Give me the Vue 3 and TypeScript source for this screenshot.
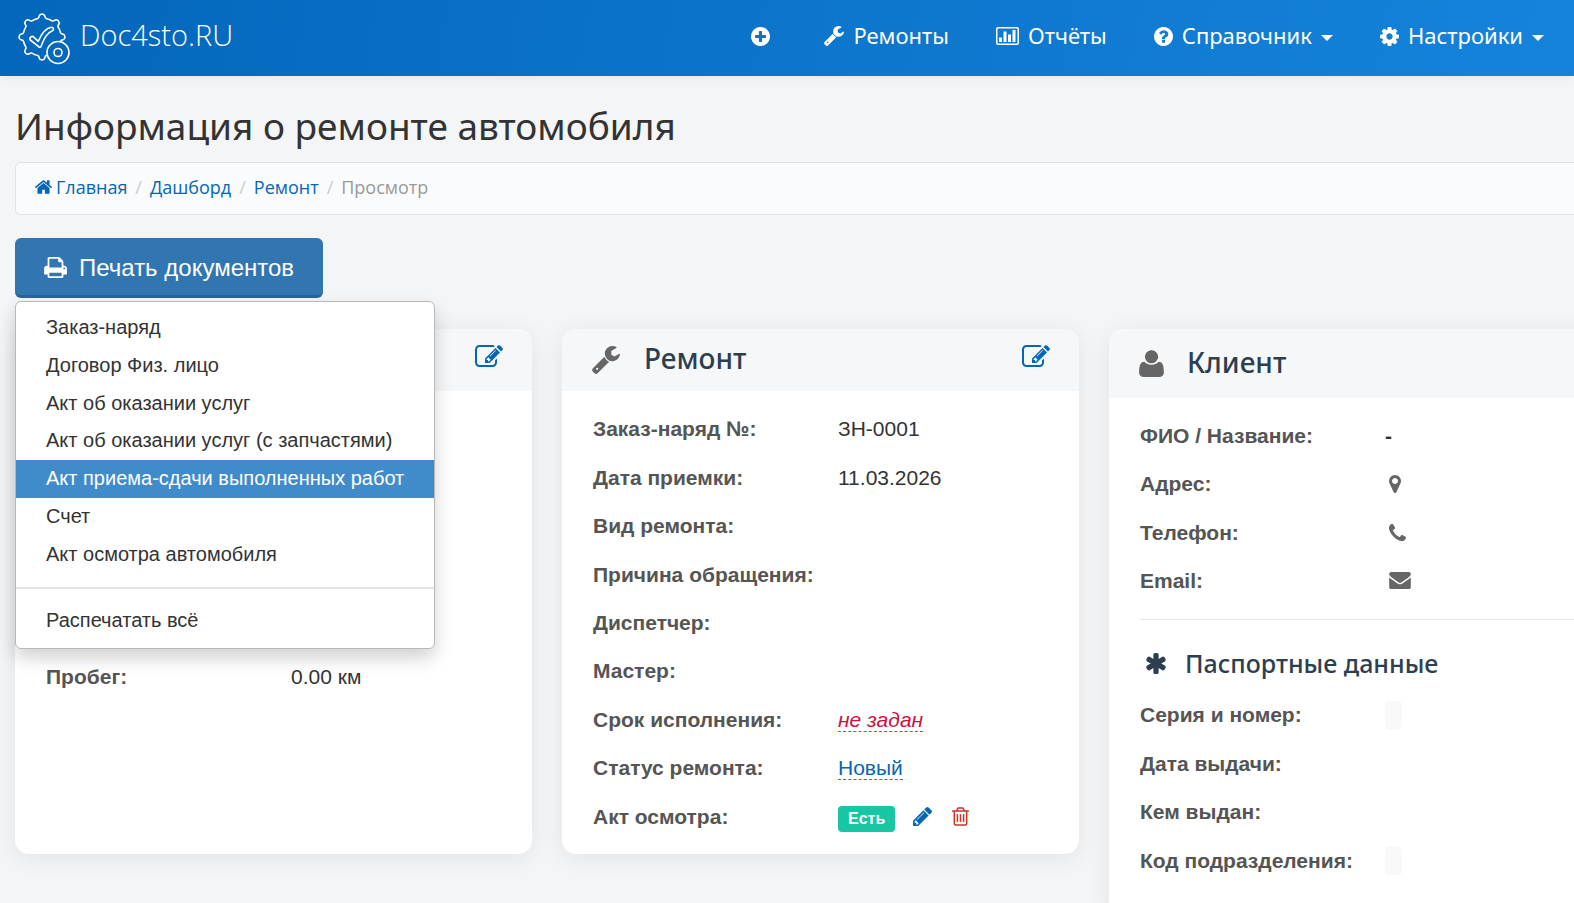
<script setup lang="ts">
import { ref } from 'vue'

interface Glyph {
  box: string
  d: string
}

const glyphs: Record<string, Glyph> = {
  plus: {
    box: '128 128 1536 1536',
    d: 'M1344 960v-128q0-26-19-45t-45-19h-256v-256q0-26-19-45t-45-19h-128q-26 0-45 19t-19 45v256h-256q-26 0-45 19t-19 45v128q0 26 19 45t45 19h256v256q0 26 19 45t45 19h128q26 0 45-19t19-45v-256h256q26 0 45-19t19-45zm320-64q0 209-103 385.5t-279.5 279.5-385.5 103-385.5-103-279.5-279.5-103-385.5 103-385.5 279.5-279.5 385.5-103 385.5 103 279.5 279.5 103 385.5z',
  },
  wrench: {
    box: '80 128 1648 1648',
    d: 'M448 1472q0-26-19-45t-45-19-45 19-19 45 19 45 45 19 45-19 19-45zm644-420l-682 682q-37 37-90 37-52 0-91-37l-106-108q-38-36-38-90 0-53 38-91l681-681q39 98 114.5 173.5t173.5 114.5zm634-435q0 39-23 106-47 134-164.5 217.5t-258.5 83.5q-185 0-316.5-131.5t-131.5-316.5 131.5-316.5 316.5-131.5q58 0 121.5 16.5t107.5 46.5q16 11 16 28t-16 28l-293 169v224l193 107q5-3 79-48.5t135.5-81 70.5-35.5q15 0 23.5 10t8.5 25z',
  },
  chart: {
    box: '0 0 23 18',
    d: 'M2 0h19q2 0 2 2v14q0 2-2 2h-19q-2 0-2-2v-14q0-2 2-2zM2 1.5q-.5 0-.5.5v14q0 .5.5.5h19q.5 0 .5-.5v-14q0-.5-.5-.5zM3 10.500h3v4.500h-3zM7.500 4.500h3v10.500h-3zM12 7.500h3v7.500h-3zM16.500 3h3v12h-3z',
  },
  question: {
    box: '128 128 1536 1536',
    d: 'M1024 1376v-192q0-14-9-23t-23-9h-192q-14 0-23 9t-9 23v192q0 14 9 23t23 9h192q14 0 23-9t9-23zm256-672q0-88-55.5-163t-138.5-116-170-41q-243 0-371 213-15 24 8 42l132 100q7 6 19 6 16 0 25-12 53-68 86-92 34-24 86-24 48 0 85.5 26t37.5 59q0 38-20 61t-68 45q-63 28-115.5 86.5t-52.500 125.5v36q0 14 9 23t23 9h192q14 0 23-9t9-23q0-19 21.5-49.5t54.5-49.5q32-18 49-28.5t46-35 44.5-48 28-60.5 12.5-81zm384 192q0 209-103 385.5t-279.5 279.5-385.5 103-385.5-103-279.5-279.5-103-385.5 103-385.5 279.5-279.5 385.5-103 385.5 103 279.5 279.5 103 385.5z',
  },
  cog: {
    box: '128 128 1536 1536',
    d: 'M1152 896q0-106-75-181t-181-75-181 75-75 181 75 181 181 75 181-75 75-181zm512-109v222q0 12-8 23t-20 13l-185 28q-19 54-39 91 35 50 107 138 10 12 10 25t-9 23q-27 37-99 108t-94 71q-12 0-26-9l-138-108q-44 23-91 38-16 136-29 186-7 28-36 28h-222q-14 0-24.5-8.5t-11.5-21.5l-28-184q-49-16-90-37l-141 107q-10 9-25 9-14 0-25-11-126-114-165-168-7-10-7-23 0-12 8-23 15-21 51-66.5t54-70.5q-27-50-41-99l-183-27q-13-2-21-12.5t-8-23.5v-222q0-12 8-23t19-13l186-28q14-46 39-92-40-57-107-138-10-12-10-24 0-10 9-23 26-36 98.5-107.5t94.5-71.5q13 0 26 10l138 107q44-23 91-38 16-136 29-186 7-28 36-28h222q14 0 24.5 8.5t11.5 21.5l28 184q49 16 90 37l142-107q9-9 24-9 13 0 25 10 129 119 165 170 7 8 7 22 0 12-8 23-15 21-51 66.5t-54 70.5q26 50 41 98l183 28q13 2 21 12.5t8 23.5z',
  },
  home: {
    box: '88 253 1616 1283',
    d: 'M1472 992v480q0 26-19 45t-45 19h-384v-384h-256v384h-384q-26 0-45-19t-19-45v-480q0-1 .5-3t.5-3l575-474 575 474q1 2 1 6zm223-69l-62 74q-8 9-21 11h-3q-13 0-21-7l-692-577-692 577q-12 8-24 7-13-2-21-11l-62-74q-8-10-7-23.5t11-21.5l719-599q32-26 76-26t76 26l244 204v-195q0-14 9-23t23-9h192q14 0 23 9t9 23v408l219 182q10 8 11 21.5t-7 23.5z',
  },
  print: {
    box: '64 128 1664 1536',
    d: 'M448 1536h896v-256h-896v256zm0-640h896v-384h-160q-40 0-68-28t-28-68v-160h-640v640zm1152 64q0-26-19-45t-45-19-45 19-19 45 19 45 45 19 45-19 19-45zm128 0v416q0 13-9.5 22.5t-22.5 9.5h-224v160q0 40-28 68t-68 28h-960q-40 0-68-28t-28-68v-160h-224q-13 0-22.5-9.5t-9.5-22.5v-416q0-79 56.5-135.5t135.5-56.5h64v-544q0-40 28-68t68-28h672q40 0 88 20t76 48l152 152q28 28 48 76t20 88v256h64q79 0 135.5 56.5t56.5 135.5z',
  },
  edit: {
    box: '0 128 1792 1408',
    d: 'M888 1184l116-116-152-152-116 116v56h96v96h56zm440-720q-16-16-33 1l-350 350q-17 17-1 33t33-1l350-350q17-17 1-33zm80 594v190q0 119-84.5 203.5t-203.5 84.5h-832q-119 0-203.5-84.5t-84.5-203.5v-832q0-119 84.5-203.5t203.5-84.5h832q63 0 117 25 15 7 18 23 3 17-9 29l-49 49q-14 14-32 8-23-6-45-6h-832q-66 0-113 47t-47 113v832q0 66 47 113t113 47h832q66 0 113-47t47-113v-126q0-13 9-22l64-64q15-15 35-7t20 29zm-96-738l288 288-672 672h-288v-288zm444 132l-92 92-288-288 92-92q28-28 68-28t68 28l152 152q28 28 28 68t-28 68z',
  },
  user: {
    box: '192 128 1408 1536',
    d: 'M1600 1405q0 120-73 189.5t-194 69.5h-874q-121 0-194-69.5t-73-189.500c0-360 60-605 300-613q110 150 404 150t404-150c240 8 300 253 300 613zM1280 512q0 159-112.5 271.5t-271.5 112.5-271.5-112.5-112.5-271.5 112.5-271.5 271.5-112.5 271.5 112.5 112.5 271.5z',
  },
  marker: {
    box: '384 128 1024 1536',
    d: 'M1152 640q0-106-75-181t-181-75-181 75-75 181 75 181 181 75 181-75 75-181zm256 0q0 109-33 179l-364 774q-16 33-47.5 52t-67.5 19-67.5-19-46.5-52l-365-774q-33-70-33-179 0-212 150-362t362-150 362 150 150 362z',
  },
  phone: {
    box: '192 128 1408 1408',
    d: 'M1600 1240q0 27-10 70.5t-21 68.5q-21 50-122 106-94 51-186 51-27 0-53-3.5t-57.5-12.5-47-14.5-55.5-20.5-49-18q-98-35-175-83-127-79-264-216t-216-264q-48-77-83-175-3-9-18-49t-20.5-55.5-14.5-47-12.5-57.5-3.5-53q0-92 51-186 56-101 106-122 25-11 68.5-21t70.5-10q14 0 21 3 18 6 53 76 11 19 30 54t35 63.5 31 53.5q3 4 17.5 25t21.5 35.5 7 28.5q0 20-28.5 50t-62 55-62 53-28.5 46q0 9 5 22.5t8.5 20.5 14 24 11.5 19q76 137 174 235t235 174q2 1 19 11.5t24 14 20.5 8.5 22.5 5q18 0 46-28.5t53-62 55-62 50-28.5q14 0 28.5 7t35.5 21.5 25 17.5q25 15 53.5 31t63.5 35 54 30q70 35 76 53 3 7 3 21z',
  },
  envelope: {
    box: '0 256 1792 1408',
    d: 'M1792 710v794q0 66-47 113t-113 47h-1472q-66 0-113-47t-47-113v-794q44 49 101 87 362 246 497 345 57 42 92.5 65.5t94.5 48 110 24.5h2q51 0 110-24.5t94.5-48 92.5-65.5q170-123 498-345 57-39 100-87zm0-294q0 79-49 151t-122 123q-376 261-468 325-10 7-42.5 31t-54 38.5-52 32.5-57.5 27-50 9h-2q-23 0-50-9t-57.5-27-52-32.5-54-38.5-42.5-31q-91-64-262-182.5t-205-142.5q-62-42-117-115.5t-55-136.5q0-78 41.5-130t118.5-52h1472q65 0 112.5 47t47.5 113z',
  },
  asterisk: {
    box: '182 128 1428 1536',
    d: 'M1546 1050q46 26 59.5 77.5t-12.5 97.5l-64 110q-26 46-77.5 59.5t-97.5-12.5l-266-153v307q0 52-38 90t-90 38h-128q-52 0-90-38t-38-90v-307l-266 153q-46 26-97.5 12.5t-77.5-59.5l-64-110q-26-46-12.5-97.5t59.5-77.5l266-154-266-154q-46-26-59.5-77.5t12.5-97.5l64-110q26-46 77.5-59.5t97.5 12.5l266 153v-307q0-52 38-90t90-38h128q52 0 90 38t38 90v307l266-153q46-26 97.5-12.5t77.5 59.5l64 110q26 46 12.5 97.5t-59.5 77.5l-266 154z',
  },
  pencil: {
    box: '128 149 1515 1515',
    d: 'M491 1536l91-91-235-235-91 91v107h128v128h107zm523-928q0-22-22-22-10 0-17 7l-542 542q-7 7-7 17 0 22 22 22 10 0 17-7l542-542q7-7 7-17zm-54-192l416 416-832 832h-416v-416zm683 96q0 53-37 90l-166 166-416-416 166-165q36-38 90-38 53 0 91 38l235 234q37 39 37 91z',
  },
  trash: {
    box: '192 128 1408 1536',
    d: 'M704 736v576q0 14-9 23t-23 9h-64q-14 0-23-9t-9-23v-576q0-14 9-23t23-9h64q14 0 23 9t9 23zm256 0v576q0 14-9 23t-23 9h-64q-14 0-23-9t-9-23v-576q0-14 9-23t23-9h64q14 0 23 9t9 23zm256 0v576q0 14-9 23t-23 9h-64q-14 0-23-9t-9-23v-576q0-14 9-23t23-9h64q14 0 23 9t9 23zm128 724v-948h-896v948q0 22 7 40.5t14.5 27 10.5 8.5h832q3 0 10.5-8.5t14.5-27 7-40.5zm-672-1076h448l-48-117q-7-9-17-11h-317q-10 2-17 11zm928 32v64q0 14-9 23t-23 9h-96v948q0 83-47 143.5t-113 60.5h-832q-66 0-113-58.5t-47-141.5v-952h-96q-14 0-23-9t-9-23v-64q0-14 9-23t23-9h309l70-167q15-37 54-63t79-26h320q40 0 79 26t54 63l70 167h309q14 0 23 9t9 23z',
  },
}

// Outline of the eight-lobed gear in the logo, centred on (cx, cy).
function gearPath(cx: number, cy: number): string {
  const at = (deg: number, r: number): string => {
    const a = (deg * Math.PI) / 180
    return `${(cx + r * Math.cos(a)).toFixed(2)} ${(cy + r * Math.sin(a)).toFixed(2)}`
  }
  let d = ''
  for (let i = 0; i < 8; i++) {
    const c = i * 45 - 90
    d += `${i ? 'A19 19 0 0 1 ' : 'M'}${at(c - 13, 19)}`
    d += `Q${at(c - 9, 19.3)} ${at(c - 8, 21)}Q${at(c - 6, 23)} ${at(c, 23)}`
    d += `Q${at(c + 6, 23)} ${at(c + 8, 21)}Q${at(c + 9, 19.3)} ${at(c + 13, 19)}`
  }
  return d + `A19 19 0 0 1 ${at(-103, 19)}Z`
}
const gear = gearPath(42, 37)

const nav = [
  { icon: 'plus', text: '', caret: false },
  { icon: 'wrench', text: 'Ремонты', caret: false },
  { icon: 'chart', text: 'Отчёты', caret: false },
  { icon: 'question', text: 'Справочник', caret: true },
  { icon: 'cog', text: 'Настройки', caret: true },
]

const documents = [
  'Заказ-наряд',
  'Договор Физ. лицо',
  'Акт об оказании услуг',
  'Акт об оказании услуг (с запчастями)',
  'Акт приема-сдачи выполненных работ',
  'Счет',
  'Акт осмотра автомобиля',
]
const active = ref(4)
const menuOpen = ref(true)

const repair = [
  { label: 'Заказ-наряд №:', value: 'ЗН-0001' },
  { label: 'Дата приемки:', value: '11.03.2026' },
  { label: 'Вид ремонта:', value: '' },
  { label: 'Причина обращения:', value: '' },
  { label: 'Диспетчер:', value: '' },
  { label: 'Мастер:', value: '' },
]

const contacts = [
  { label: 'Адрес:', icon: 'marker' },
  { label: 'Телефон:', icon: 'phone' },
  { label: 'Email:', icon: 'envelope' },
]

const passport = [
  { label: 'Серия и номер:', chip: true },
  { label: 'Дата выдачи:', chip: false },
  { label: 'Кем выдан:', chip: false },
  { label: 'Код подразделения:', chip: true },
]
</script>

<template>
  <div class="page">
    <header class="navbar">
      <a class="brand" href="#">
        <svg class="brand-mark" viewBox="18 13 53 52" aria-hidden="true">
          <mask id="brand-cut">
            <rect x="18" y="13" width="53" height="52" fill="#fff" />
            <circle cx="58" cy="52.500" r="12" fill="#000" />
          </mask>
          <path :d="gear" mask="url(#brand-cut)" />
          <path d="M30.300 40a2.300 2.300 0 0 1 3.700-2.700l4.300 4C41.500 33.500 46 28 51.500 27.200a1.900 1.900 0 0 1 .9 3.600C47 33 44.500 37.500 41 46.500a1.300 1.300 0 0 1-2.300.2z" />
          <circle cx="58" cy="52.500" r="11" />
          <circle cx="58" cy="52.500" r="4" />
        </svg>
        <span class="brand-name">Doc4sto.RU</span>
      </a>
      <nav class="nav">
        <a v-for="item in nav" :key="item.icon" class="nav-link" href="#">
          <svg :class="['icon', 'nav-' + item.icon]" :viewBox="glyphs[item.icon].box" aria-hidden="true">
            <path :d="glyphs[item.icon].d" fill-rule="evenodd" />
          </svg>
          <span v-if="item.text" class="nav-text">{{ item.text }}</span>
          <span v-if="item.caret" class="caret"></span>
        </a>
      </nav>
    </header>

    <main class="content">
      <h1 class="title">Информация о ремонте автомобиля</h1>

      <nav class="crumbs">
        <a class="crumb-home" href="#">
          <svg class="icon home" :viewBox="glyphs.home.box" aria-hidden="true"><path :d="glyphs.home.d" /></svg>
          <span>Главная</span>
        </a>
        <span class="slash">/</span>
        <a href="#">Дашборд</a>
        <span class="slash">/</span>
        <a href="#">Ремонт</a>
        <span class="slash">/</span>
        <span class="current">Просмотр</span>
      </nav>

      <div class="dropdown">
        <button class="print-button" type="button" :aria-expanded="menuOpen" @click="menuOpen = !menuOpen">
          <svg class="icon print" :viewBox="glyphs.print.box" aria-hidden="true"><path :d="glyphs.print.d" /></svg>
          <span>Печать документов</span>
        </button>
        <div v-if="menuOpen" class="menu">
          <div class="menu-group">
            <a
              v-for="(doc, i) in documents"
              :key="doc"
              :class="['menu-item', { active: i === active }]"
              href="#"
              @mouseenter="active = i"
            >{{ doc }}</a>
          </div>
          <hr class="menu-divider" />
          <a class="menu-item last" href="#">Распечатать всё</a>
        </div>
      </div>

      <div class="cards">
        <section class="card">
          <div class="card-head">
            <a class="edit" href="#" aria-label="Изменить">
              <svg class="icon edit-icon" :viewBox="glyphs.edit.box"><path :d="glyphs.edit.d" /></svg>
            </a>
          </div>
          <dl class="rows car-rows">
            <div class="row"><dt>Пробег:</dt><dd>0.00 км</dd></div>
          </dl>
        </section>

        <section class="card">
          <div class="card-head">
            <svg class="icon head-wrench" :viewBox="glyphs.wrench.box" aria-hidden="true"><path :d="glyphs.wrench.d" /></svg>
            <h2>Ремонт</h2>
            <a class="edit" href="#" aria-label="Изменить">
              <svg class="icon edit-icon" :viewBox="glyphs.edit.box"><path :d="glyphs.edit.d" /></svg>
            </a>
          </div>
          <dl class="rows repair-rows">
            <div v-for="row in repair" :key="row.label" class="row">
              <dt>{{ row.label }}</dt><dd>{{ row.value }}</dd>
            </div>
            <div class="row"><dt>Срок исполнения:</dt><dd><a class="editable unset" href="#">не задан</a></dd></div>
            <div class="row"><dt>Статус ремонта:</dt><dd><a class="editable" href="#">Новый</a></dd></div>
            <div class="row">
              <dt>Акт осмотра:</dt>
              <dd class="act">
                <span class="badge">Есть</span>
                <a class="act-edit" href="#" aria-label="Изменить акт">
                  <svg class="icon pencil" :viewBox="glyphs.pencil.box"><path :d="glyphs.pencil.d" /></svg>
                </a>
                <a class="act-delete" href="#" aria-label="Удалить акт">
                  <svg class="icon trash" :viewBox="glyphs.trash.box"><path :d="glyphs.trash.d" /></svg>
                </a>
              </dd>
            </div>
          </dl>
        </section>

        <section class="card">
          <div class="card-head client-head">
            <svg class="icon head-user" :viewBox="glyphs.user.box" aria-hidden="true">
              <path :d="glyphs.user.d" />
              <circle class="user-gap" cx="896" cy="512" r="420" />
            </svg>
            <h2>Клиент</h2>
          </div>
          <dl class="rows client-rows">
            <div class="row"><dt>ФИО / Название:</dt><dd><strong>-</strong></dd></div>
            <div v-for="row in contacts" :key="row.label" class="row">
              <dt>{{ row.label }}</dt>
              <dd class="contact">
                <svg :class="['icon', row.icon]" :viewBox="glyphs[row.icon].box" aria-hidden="true"><path :d="glyphs[row.icon].d" /></svg>
              </dd>
            </div>
          </dl>
          <div class="passport-head">
            <svg class="icon asterisk" :viewBox="glyphs.asterisk.box" aria-hidden="true"><path :d="glyphs.asterisk.d" /></svg>
            <h3>Паспортные данные</h3>
          </div>
          <dl class="rows passport-rows">
            <div v-for="row in passport" :key="row.label" class="row">
              <dt>{{ row.label }}</dt><dd><span v-if="row.chip" class="chip"></span></dd>
            </div>
          </dl>
        </section>
      </div>
    </main>
  </div>
</template>

<style>
body {
  margin: 0;
  background: #f4f5f7;
}
</style>

<style scoped>
* {
  box-sizing: border-box;
}
.page {
  height: 100vh;
  overflow: hidden;
  font-family: "Liberation Sans", Arial, sans-serif;
  font-size: 21px;
  color: #333;
}
a {
  color: #0566b7;
  text-decoration: none;
}
.icon {
  display: block;
  flex: none;
  fill: currentColor;
}

.navbar {
  display: flex;
  justify-content: space-between;
  height: 76px;
  padding: 0 30px 0 18px;
  background: linear-gradient(100deg, #0367bb, #1583dc);
  box-shadow: 0 2px 10px rgba(0, 0, 0, 0.06);
}
.brand {
  display: flex;
  align-items: center;
  gap: 9px;
  color: #fff;
}
.brand-mark {
  width: 53px;
  height: 52px;
  margin-top: 2px;
  fill: none;
  stroke: #fff;
  stroke-width: 1.6;
  stroke-linejoin: round;
}
.brand-name {
  padding-bottom: 7px;
  font-family: "Open Sans", "Noto Sans", sans-serif;
  font-size: 29px;
  font-weight: 300;
}
.nav {
  display: flex;
  align-items: center;
  gap: 47px;
  padding-bottom: 4px;
  font-family: "Noto Sans", "Open Sans", sans-serif;
  font-size: 22px;
}
.nav-link {
  display: flex;
  align-items: center;
  gap: 9px;
  color: #fff;
}
.nav-text {
  padding-bottom: 2px;
}
.nav-plus,
.nav-question,
.nav-cog {
  width: 19px;
  height: 19px;
}
.nav-plus {
  margin-right: 7px;
}
.nav-wrench {
  width: 20px;
  height: 20px;
}
.nav-chart {
  width: 23px;
  height: 18px;
}
.caret {
  border: 6px solid transparent;
  border-top-color: #fff;
  border-bottom: 0;
  margin-top: 4px;
}

.content {
  width: calc(100% + 67px);
  padding: 24px 15px 0;
}
.title {
  margin: 0 0 10px;
  font: 400 37px/52px "Noto Sans", "Open Sans", sans-serif;
}
.crumbs {
  display: flex;
  align-items: center;
  gap: 8px;
  height: 53px;
  padding: 0 19px 3px;
  border: 1px solid #dfe3e7;
  border-radius: 5px;
  background: #fafbfc;
  font-family: "Open Sans", "Noto Sans", sans-serif;
  font-size: 18px;
}
.crumb-home {
  display: flex;
  align-items: center;
  gap: 4px;
}
.home {
  width: 17px;
  height: 14px;
}
.slash {
  color: #ccc;
}
.current {
  color: #999;
}

.dropdown {
  position: relative;
  width: max-content;
  margin: 23px 0 31px;
}
.print-button {
  display: flex;
  align-items: center;
  gap: 12px;
  height: 60px;
  padding: 2px 29px 0;
  border: 0;
  border-bottom: 3px solid #2a639c;
  border-radius: 6px;
  background: #3276b1;
  color: #fff;
  font-family: inherit;
  font-size: 24px;
}
.print {
  width: 23px;
  height: 21px;
}
.menu {
  position: absolute;
  z-index: 2;
  top: 63px;
  left: 0;
  width: max-content;
  padding: 7px 0 9px;
  border: 1px solid #b8b8b8;
  border-radius: 6px;
  background: #fff;
  box-shadow: 0 9px 18px rgba(0, 0, 0, 0.18);
  font-size: 20px;
}
.menu-group {
  display: grid;
  grid-auto-rows: 1fr;
  height: 264px;
}
.menu-item {
  display: flex;
  align-items: center;
  padding: 0 30px;
  color: #333;
  white-space: nowrap;
}
.menu-item.active {
  background: #428bca;
  color: #fff;
}
.menu-item.last {
  height: 38px;
}
.menu-divider {
  height: 2px;
  margin: 14px 0 12px;
  border: 0;
  background: #e5e5e5;
}

.cards {
  display: grid;
  grid-template-columns: repeat(3, 1fr);
  align-items: start;
  gap: 30px;
}
.card {
  min-height: 525px;
  border-radius: 14px;
  background: #fff;
  box-shadow: 0 4px 24px rgba(0, 0, 0, 0.08);
}
.card-head {
  display: flex;
  align-items: center;
  height: 62px;
  padding: 0 29px 0 30px;
  border-radius: 14px 14px 0 0;
  background: #f6f7f9;
  color: #666;
}
.client-head {
  height: 69px;
}
h2,
h3 {
  margin: 0;
  color: #2c3e50;
  font-family: "Noto Sans", "Open Sans", sans-serif;
  font-weight: 500;
}
h2 {
  padding-bottom: 4px;
  font-size: 28px;
}
h3 {
  font-size: 25px;
}
.head-wrench {
  width: 28px;
  height: 28px;
  margin-right: 24px;
}
.head-user {
  width: 25px;
  height: 27px;
  margin-right: 23px;
}
.user-gap {
  fill: none;
  stroke: #f6f7f9;
  stroke-width: 72;
}
.edit {
  margin-left: auto;
  padding-bottom: 8px;
}
.edit-icon {
  width: 28px;
  height: 22px;
}
.rows {
  display: grid;
  grid-auto-rows: 1fr;
  margin: 0;
  padding: 14px 31px 12px;
}
.row {
  display: grid;
  grid-template-columns: 245px 1fr;
  align-items: center;
}
dt {
  color: #555;
  font-weight: 700;
}
dd {
  margin: 0;
}
.car-rows {
  padding-top: 262px;
  grid-auto-rows: 48px;
}
.repair-rows {
  height: 462px;
}
.editable {
  border-bottom: 1px dashed #0088cc;
}
.unset {
  color: #cc1144;
  font-style: italic;
}
.act {
  display: flex;
  align-items: center;
}
.badge {
  padding: 0 10px;
  margin-top: 4px;
  border-radius: 4px;
  background: #18c5a5;
  color: #fff;
  font-size: 16px;
  font-weight: 700;
  line-height: 26px;
}
.act-edit {
  margin-left: 18px;
}
.act-delete {
  margin-left: 20px;
  color: #c0392b;
}
.pencil {
  width: 19px;
  height: 19px;
}
.trash {
  width: 17px;
  height: 19px;
}
.client-rows {
  height: 207px;
  padding-bottom: 0;
}
.contact {
  padding-left: 4px;
  color: #666;
}
.marker {
  width: 12px;
  height: 18px;
}
.phone {
  width: 17px;
  height: 17px;
}
.envelope {
  width: 22px;
  height: 17px;
}
.passport-head {
  display: flex;
  align-items: center;
  gap: 19px;
  margin: 14px 31px 0;
  padding: 23px 6px 8px;
  border-top: 1px solid #e8e8e8;
  color: #2c3e50;
  line-height: 40px;
}
.asterisk {
  width: 20px;
  height: 21px;
}
.passport-rows {
  height: 224px;
  padding: 0 31px 30px;
}
.chip {
  display: block;
  width: 17px;
  height: 29px;
  border-radius: 4px;
  background: #f8f9fa;
}
</style>
